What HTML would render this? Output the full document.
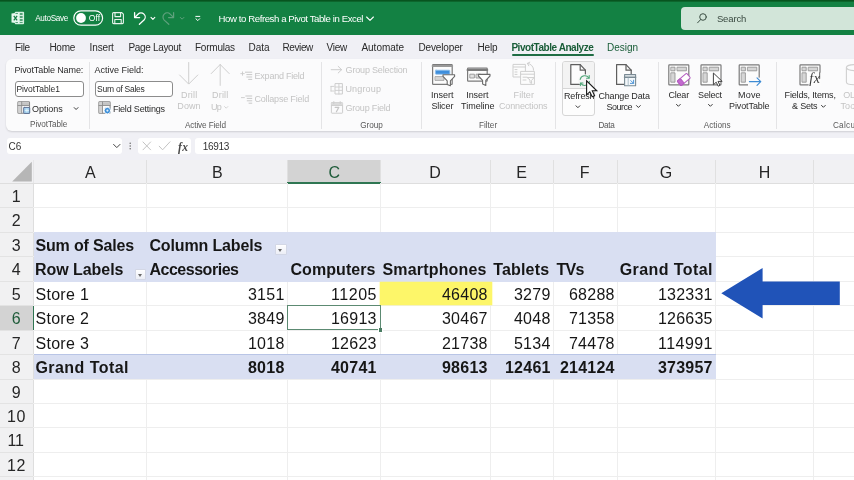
<!DOCTYPE html>
<html lang="en">
<head>
<meta charset="utf-8">
<title>How to Refresh a Pivot Table in Excel</title>
<style>
*{box-sizing:border-box;margin:0;padding:0}
html,body{width:854px;height:480px;overflow:hidden;background:#fff}
body{position:relative;font-family:"Liberation Sans",sans-serif;color:#262626}
.a{position:absolute}
.tx{position:absolute;white-space:nowrap}
#txt{position:absolute;left:0;top:0;width:854px;height:480px;will-change:transform}
svg{position:absolute;overflow:visible}
/* title bar */
#title{left:0;top:0;width:854px;height:35.4px;background:#138143}
#topstrip{left:0;top:0;width:854px;height:2.4px;background:linear-gradient(#07541f 0,#07541f 45%,#117337 100%)}
#search{left:681px;top:7px;width:180px;height:23px;border-radius:4px;background:#d2e5d9}
/* tabs + ribbon backdrop */
#chrome{left:0;top:35px;width:854px;height:125px;background:#f0f0f5}
#ribbon{left:6px;top:58.8px;width:860px;height:72.4px;background:#fbfbfc;border-radius:6px;box-shadow:0 1px 2px rgba(0,0,0,.14)}
.sep{position:absolute;top:62px;width:1px;height:67px;background:#e4e4e6}
.inp{position:absolute;top:81px;height:16px;border:1px solid #8c8c8c;border-radius:3px;background:#fff}
.fbox{position:absolute;top:138px;height:16px;background:#fff;border-radius:3px}
/* grid */
#sheet{left:0;top:160px;width:854px;height:320px;background:#fff}
.ch{position:absolute;top:160px;height:23px;background:#f1f1f3;border-right:1px solid #e0e0e0}
.rh{position:absolute;left:0;width:33px;background:#f1f1f2;border-bottom:1px solid #e3e3e3}
.vl{position:absolute;top:183px;width:1px;height:297px;background:#eeeeee}
.hl{position:absolute;left:33px;height:1px;width:821px;background:#eeeeee}
.band{position:absolute;left:34px;width:682px;background:#d9dff2}
.dd{position:absolute;width:11.6px;height:11.6px;background:linear-gradient(#fefeff,#eceef6);border:1px solid #d3d7e5;border-radius:1px}
.dd:after{content:"";position:absolute;left:2.3px;top:4.2px;border-left:2.5px solid transparent;border-right:2.5px solid transparent;border-top:3px solid #6a6a6a}
</style>
</head>

<body>
<!-- ======= TITLE BAR ======= -->
<div class="a" id="title"></div><div class="a" id="topstrip"></div><div class="a" id="search"></div>
<!-- ======= TABS / RIBBON BACKDROP ======= -->
<div class="a" id="chrome"></div>
<div class="a" id="ribbon"></div>
<div class="a" style="left:512px;top:54.4px;width:82px;height:1.8px;background:#1f6d44;border-radius:1px"></div>
<div class="sep" style="left:89px"></div>
<div class="sep" style="left:321px"></div>
<div class="sep" style="left:421px"></div>
<div class="sep" style="left:555px"></div>
<div class="sep" style="left:658px"></div>
<div class="sep" style="left:776px"></div>
<div class="inp" style="left:15px;width:69px"></div><div class="inp" style="left:95px;width:78px"></div>
<!-- refresh hover button -->
<div class="a" style="left:562px;top:61px;width:33px;height:55px;border:1px solid #d6d6d6;border-radius:3px;background:#fdfdfd"></div>
<div class="a" style="left:563px;top:62px;width:31px;height:27px;background:#f3f3f3;border-bottom:1px solid #d6d6d6;border-radius:2px 2px 0 0"></div>
<!-- ======= FORMULA BAR ======= -->
<div class="fbox" style="left:7px;width:115px"></div><div class="fbox" style="left:138px;width:53px"></div><div class="fbox" style="left:195px;width:670px"></div>
<!-- ======= SHEET ======= -->
<div class="a" id="sheet"></div>
<div class="ch" style="left:34px;width:113px"></div>
<div class="ch" style="left:147px;width:141px"></div>
<div class="ch" style="left:288px;width:93px;background:#d3d3d3"></div>
<div class="ch" style="left:381px;width:110px"></div>
<div class="ch" style="left:491px;width:63px"></div>
<div class="ch" style="left:554px;width:64px"></div>
<div class="ch" style="left:618px;width:98px"></div>
<div class="ch" style="left:716px;width:98px"></div>
<div class="ch" style="left:814px;width:87px"></div>
<div class="a" style="left:0;top:160px;width:34px;height:23px;background:#f1f1f3;border-right:1px solid #e6e6e8"></div>
<div class="a" style="left:0;top:183px;width:854px;height:1px;background:#dedede"></div>
<div class="a" style="left:287px;top:182px;width:94px;height:1.5px;background:#2f7652"></div>
<svg style="left:0;top:160px" width="34" height="24" viewBox="0 160 34 24"><path d="M31.8 161.8 L31.8 181.4 L12.2 181.4 Z" fill="#b6b6b6"/></svg>
<div class="rh" style="top:184px;height:24px"></div>
<div class="rh" style="top:208px;height:25px"></div>
<div class="rh" style="top:233px;height:24px"></div>
<div class="rh" style="top:257px;height:25px"></div>
<div class="rh" style="top:282px;height:24px"></div>
<div class="rh" style="top:306px;height:25px;background:#d3d3d3"></div>
<div class="rh" style="top:331px;height:24px"></div>
<div class="rh" style="top:355px;height:25px"></div>
<div class="rh" style="top:380px;height:24px"></div>
<div class="rh" style="top:404px;height:24px"></div>
<div class="rh" style="top:428px;height:25px"></div>
<div class="rh" style="top:453px;height:24px"></div>
<div class="rh" style="top:477px;height:25px"></div>
<div class="a" style="left:33px;top:183px;width:1px;height:297px;background:#dedede"></div>
<div class="a" style="left:32.5px;top:305px;width:1.5px;height:26px;background:#2f7652"></div>
<div class="vl" style="left:146px"></div>
<div class="vl" style="left:287px"></div>
<div class="vl" style="left:380px"></div>
<div class="vl" style="left:490px"></div>
<div class="vl" style="left:553px"></div>
<div class="vl" style="left:617px"></div>
<div class="vl" style="left:715px"></div>
<div class="vl" style="left:813px"></div>
<div class="hl" style="top:207px"></div>
<div class="hl" style="top:232px"></div>
<div class="hl" style="top:256px"></div>
<div class="hl" style="top:281px"></div>
<div class="hl" style="top:305px"></div>
<div class="hl" style="top:330px"></div>
<div class="hl" style="top:354px"></div>
<div class="hl" style="top:379px"></div>
<div class="hl" style="top:403px"></div>
<div class="hl" style="top:427px"></div>
<div class="hl" style="top:452px"></div>
<div class="hl" style="top:476px"></div>
<div class="band" style="top:232px;height:50px"></div>
<div class="band" style="top:354px;height:25px;border-top:1px solid #b9c5e6"></div>
<div class="a" style="left:379.6px;top:281.8px;width:112px;height:22.8px;background:#fdf669;box-shadow:0 0 .8px .3px #fdf669"></div>
<div class="dd" style="left:275px;top:243.8px"></div><div class="dd" style="left:134.5px;top:268.6px"></div>
<div class="a" style="left:287px;top:305.2px;width:93.6px;height:25px;border:1.2px solid #5c8a72;background:#fff"></div>
<div class="a" style="left:378px;top:327.6px;width:5px;height:5px;background:#fff"></div><div class="a" style="left:378.8px;top:328.4px;width:3.6px;height:3.6px;background:#4a7c62"></div>
<svg style="left:715px;top:262px" width="139" height="64" viewBox="715 262 139 64"><path d="M721.3 293.2 L762.6 268 L762.6 281.5 L839.8 281.5 L839.8 305 L762.6 305 L762.6 318.5 Z" fill="#2053b8"/></svg>
<!-- ======= TITLE BAR ICONS ======= -->
<svg style="left:0;top:0" width="854" height="36" viewBox="0 0 854 36" fill="none" stroke-linecap="round" stroke-linejoin="round">
  <!-- excel logo -->
  <rect x="14.8" y="11.8" width="9.3" height="12.4" rx=".9" fill="#d4f0e0" stroke="none"/>
  <path d="M11.5 13.6 L19.2 12.6 V23.4 L11.5 22.4 Z" fill="#e8f8ef" stroke="none"/>
  <path d="M13.8 15.9l3.3 4.5M17.1 15.9l-3.3 4.5" stroke="#177f46" stroke-width="1.25" stroke-linecap="butt"/>
  <g fill="#2b8a57" stroke="none">
    <rect x="19.7" y="13.3" width="3" height="1.4" rx=".4"/><rect x="19.7" y="16.2" width="3" height="1.5" rx=".4"/><rect x="19.7" y="19.2" width="3" height="1.5" rx=".4"/>
    <rect x="19.7" y="22" width="3" height=".8" rx=".3"/><rect x="15.4" y="22" width="2.6" height=".8" rx=".3"/><rect x="15.4" y="13.3" width="2.6" height=".8" rx=".3"/>
  </g>
  <!-- autosave toggle -->
  <rect x="73.8" y="10.8" width="28.8" height="14.4" rx="7.2" stroke="#fff" stroke-width="1.2"/>
  <circle cx="81" cy="18" r="4.9" fill="#fff"/>
  <!-- save -->
  <path d="M112.6 13.6a1 1 0 0 1 1-1h8.2l1.6 1.6v8.4a1 1 0 0 1-1 1h-8.8a1 1 0 0 1-1-1z" stroke="#e9f4ed" stroke-width="1.1"/>
  <path d="M115 12.8v3.8h5.6v-3.8M114.8 23.4v-3.9h6.4v3.9" stroke="#e9f4ed" stroke-width="1.1"/>
  <!-- undo -->
  <path d="M134.6 12.6v5h5" stroke="#fff" stroke-width="1.3"/>
  <path d="M135 17.2l3-3a4.2 4.2 0 0 1 6 5.9l-4.6 4.2" stroke="#fff" stroke-width="1.3"/>
  <path d="M151 17.4l1.9 1.9 1.9-1.9" stroke="#fff" stroke-width="1.1"/>
  <!-- redo (dim) -->
  <path d="M173.6 12.6v5h-5" stroke="#5fa17d" stroke-width="1.2"/>
  <path d="M173.2 17.2l-3-3a4.2 4.2 0 0 0-6 5.9l4.6 4.2" stroke="#5fa17d" stroke-width="1.2"/>
  <path d="M180.3 17.4l1.8 1.8 1.8-1.8" stroke="#5fa17d" stroke-width="1"/>
  <!-- customize -->
  <path d="M195.8 16.4h4" stroke="#fff" stroke-width="1"/>
  <path d="M195.9 18.7l1.9 1.9 1.9-1.9" stroke="#fff" stroke-width="1"/>
  <!-- title chevron -->
  <path d="M366.6 17l3.4 3.4 3.4-3.4" stroke="#fff" stroke-width="1.1"/>
  <!-- search magnifier -->
  <circle cx="703" cy="17" r="3.3" stroke="#3d5045" stroke-width="1"/>
  <path d="M700.6 19.6l-3 3.2" stroke="#3d5045" stroke-width="1"/>
</svg>
<!-- ======= RIBBON ICONS ======= -->
<svg style="left:0;top:58px" width="854" height="76" viewBox="0 58 854 76" fill="none" stroke-linecap="round" stroke-linejoin="round">
  <defs>
    <g id="pv">
      <rect x=".6" y=".6" width="20" height="20" rx=".6" stroke="#7b7b7b" stroke-width="1.2" fill="#fcfcfc"/>
      <rect x="3" y="3" width="3.8" height="3.6" fill="#d6d6d6" stroke="#8c8c8c" stroke-width=".8"/>
      <rect x="9.2" y="3" width="9" height="3.6" fill="#d6d6d6" stroke="#8c8c8c" stroke-width=".8"/>
      <rect x="3" y="8.6" width="3.8" height="9.4" fill="#d6d6d6" stroke="#8c8c8c" stroke-width=".8"/>
    </g>
    <g id="funnel">
      <path d="M0 0h11.6v1.6l-4.2 4.4v5l-3.2-1.4v-3.6l-4.2-4.4z" fill="#fff" stroke="#6a6a6a" stroke-width="1.1"/>
    </g>
    <g id="doc">
      <path d="M.6 .6h9.4l5.2 5.6v14.2h-14.6z" fill="#fcfcfc" stroke="#5e5e5e" stroke-width="1.2"/>
      <path d="M10 .6v5.6h5.2" stroke="#5e5e5e" stroke-width="1.2"/>
    </g>
    <path id="chev" d="M-1.9 -1l1.9 1.9 1.9-1.9" stroke="#3a3a3a" stroke-width="1"/>
  </defs>

  <!-- Options icon -->
  <rect x="17.9" y="101.8" width="11.6" height="11.4" rx=".8" fill="#fcfcfc" stroke="#858585" stroke-width="1.1"/>
  <rect x="18.4" y="102.3" width="10.6" height="3" fill="#c4c4c4" stroke="none"/>
  <rect x="18.4" y="102.3" width="3.2" height="10.4" fill="#d2d2d2" stroke="none"/>
  <path d="M18 105.5h11.4M21.7 102v11" stroke="#8c8c8c" stroke-width=".9"/>
  <rect x="23.7" y="107.4" width="6" height="6" rx=".5" fill="#a6d4f0" stroke="#5c6f94" stroke-width="1"/>
  <path d="M25.2 110.4h3.4M26.9 108.8v3.2" stroke="#eaf6fd" stroke-width=".8"/>
  <use href="#chev" x="76.1" y="108.6"/>
  <!-- Field Settings icon -->
  <rect x="98.9" y="101.8" width="11.2" height="11.4" rx=".8" fill="#fcfcfc" stroke="#858585" stroke-width="1.1"/>
  <rect x="99.4" y="102.3" width="10.2" height="3" fill="#c4c4c4" stroke="none"/>
  <rect x="99.4" y="102.3" width="3" height="10.4" fill="#d2d2d2" stroke="none"/>
  <path d="M99 105.5h11M102.5 102v11" stroke="#8c8c8c" stroke-width=".9"/>
  <circle cx="107.4" cy="110.6" r="3.3" fill="#3d8fd8" stroke="#fcfcfc" stroke-width=".9"/>
  <circle cx="107.4" cy="110.6" r="1.1" fill="#dff0fc"/>

  <!-- Drill Down (dim) -->
  <path d="M188.7 62.5v21M179.6 75l9.1 9.1 9.1-9.1" stroke="#cfcfcf" stroke-width="1"/>
  <!-- Drill Up (dim) -->
  <path d="M220.2 85.4v-21M211.2 73.6l9-9.1 9 9.1" stroke="#cfcfcf" stroke-width="1"/>
  <path d="M224.6 106.6l1.6 1.6 1.6-1.6" stroke="#cfcfcf" stroke-width=".9"/>
  <!-- Expand / Collapse field (dim) -->
  <path d="M245.4 72.2h6.4M246.8 74.6h5M246.8 77h5M248.6 79.4h3.2" stroke="#c9c9c9" stroke-width="1"/>
  <path d="M240.8 73.6h3.4M242.5 71.9v3.4" stroke="#c9c9c9" stroke-width=".9"/>
  <path d="M245.8 96h6M247.2 98.4h4.6M247.2 100.8h4.6M249 103.2h2.8" stroke="#c9c9c9" stroke-width="1"/>
  <path d="M241.4 97.6h3" stroke="#c9c9c9" stroke-width=".9"/>

  <!-- Group Selection arrow / Ungroup / Group Field (dim) -->
  <path d="M331.2 69.7h10.4M338.2 66.4l3.4 3.3-3.4 3.3" stroke="#cdcdcd" stroke-width="1"/>
  <rect x="335.4" y="83.6" width="7" height="10.4" stroke="#cdcdcd" stroke-width="1"/>
  <path d="M335.4 87h7M335.4 90.4h7M338.9 83.6v10.4M331 86.4h3M331 91h3M331 86.4v4.6" stroke="#cdcdcd" stroke-width=".9"/>
  <rect x="331.4" y="102.6" width="11.2" height="10.6" rx=".6" stroke="#cdcdcd" stroke-width="1"/>
  <rect x="331.4" y="102.6" width="11.2" height="2.8" fill="#dcdcdc" stroke="none"/><path d="M331.4 105.4h11.2M333.8 101.6v2M340.2 101.6v2" stroke="#cdcdcd" stroke-width="1"/>
  <path d="M335.2 107.4h3.6l-2.4 4.4" stroke="#c6c6c6" stroke-width="1.2"/>

  <!-- Insert Slicer -->
  <rect x="432.6" y="64.6" width="19.6" height="19.8" rx=".6" stroke="#7b7b7b" stroke-width="1.2" fill="#fcfcfc"/>
  <path d="M432.6 66h19.6" stroke="#999" stroke-width="2"/>
  <rect x="435.4" y="70.2" width="14.4" height="4" rx=".6" fill="#3f8fdc" stroke="#8fc0ee" stroke-width=".8"/>
  <rect x="435.4" y="76.6" width="8.6" height="3.8" fill="#d6d6d6" stroke="#9a9a9a" stroke-width=".8"/>
  <use href="#funnel" x="443" y="74.8"/>
  <!-- Insert Timeline -->
  <rect x="467.6" y="68.2" width="19.6" height="13" rx=".6" stroke="#7b7b7b" stroke-width="1.2" fill="#fcfcfc"/>
  <path d="M467.6 70h19.6" stroke="#7b7b7b" stroke-width="2.2"/>
  <rect x="470.2" y="74.2" width="4.2" height="3.8" fill="#e2e2e2" stroke="#8c8c8c" stroke-width=".8"/>
  <rect x="476.4" y="74.2" width="4.2" height="3.8" fill="#e2e2e2" stroke="#8c8c8c" stroke-width=".8"/>
  <use href="#funnel" x="478.4" y="74.4"/>
  <!-- Filter Connections (dim) -->
  <g stroke="#cfcfcf" stroke-width="1">
    <rect x="513.4" y="64.4" width="12" height="12.6" fill="#fcfcfc"/>
    <path d="M513.4 67h12M515 69.6h2M515 72h2M515 74.4h2"/>
    <path d="M527.4 63.4a6.4 6.4 0 0 1 6.2 6.8M527.4 63.4l2.4-1.2M527.4 63.4l1.4 2.4"/>
    <rect x="521" y="71.4" width="13.4" height="13" fill="#fcfcfc"/>
    <path d="M521 74.2h13.4M523 77.2h4M523 80h3"/>
    <path d="M527.6 77.6h6.4l-2.4 2.8v3l-1.6-.8v-2.2z" fill="#fcfcfc"/>
  </g>

  <!-- Refresh -->
  <use href="#doc" x="570.2" y="64"/>
  <circle cx="584.8" cy="80.6" r="6.4" fill="#f4f4f4"/>
  <path d="M580.2 79.4a4.8 4.8 0 0 1 8.6-1.6M589.4 81.6a4.8 4.8 0 0 1-8.6 1.8" stroke="#4fa678" stroke-width="1.1"/>
  <path d="M589.2 75.6v2.6h-2.6M580.4 85.6v-2.6h2.6" stroke="#4fa678" stroke-width="1.1"/>
  <use href="#chev" x="577.9" y="106.8"/>
  <!-- Change Data Source -->
  <use href="#doc" x="616" y="64"/>
  <rect x="624.6" y="74.6" width="11" height="11.2" fill="#f4f8fb" stroke="#7a8a94" stroke-width="1.1"/>
  <path d="M624.6 77.2h11" stroke="#7a8a94" stroke-width="1.6"/>
  <path d="M628.2 78v7.6" stroke="#9ab0bd" stroke-width=".8"/>
  <path d="M630.4 83.4h3.2v-3.2M633.4 83.2l-2.6-2.6" stroke="#3d8bd4" stroke-width=".9"/>
  <use href="#chev" x="638.4" y="106.6"/>

  <!-- Clear -->
  <use href="#pv" x="668.2" y="64.2"/>
  <g transform="translate(683.8 79.5) rotate(-40)">
    <rect x="-6.2" y="-3" width="12.4" height="6" rx=".8" fill="#fff" stroke="#b45cc0" stroke-width="1"/>
    <rect x="-6.2" y="-3" width="4.2" height="6" rx=".8" fill="#c36bd0" stroke="#b45cc0" stroke-width="1"/>
  </g>
  <use href="#chev" x="678.4" y="105.4"/>
  <!-- Select -->
  <use href="#pv" x="700.4" y="64.2"/>
  <path d="M713.4 73.4v11.4l2.8-2.6 2 4 1.8-.9-2-3.9h3.8z" fill="#fff" stroke="#444" stroke-width="1" />
  <use href="#chev" x="710.4" y="105.4"/>
  <!-- Move PivotTable -->
  <use href="#pv" x="738.6" y="64.2"/>
  <rect x="748" y="77.6" width="14" height="9" fill="#fbfbfc"/>
  <path d="M749.4 81.6h11.2M757 77.8l3.8 3.8-3.8 3.8" stroke="#3d8bd4" stroke-width="1.1"/>
  <!-- Fields, Items & Sets -->
  <use href="#pv" x="799.4" y="64.2"/>
  <rect x="808.6" y="72.6" width="12.6" height="13.4" fill="#fcfcfc"/>
  <path d="M819.6 72.6v6" stroke="#7b7b7b" stroke-width="1.2"/>
  <use href="#chev" x="823.4" y="106.4"/>
  <!-- OLAP cylinder (dim) -->
  <path d="M846.4 67.6v14.4c0 1.6 3.6 2.8 8 2.8s8-1.2 8-2.8v-14.4" stroke="#d0d0d0" stroke-width="1.1"/>
  <ellipse cx="854.4" cy="67.6" rx="8" ry="3" stroke="#d0d0d0" stroke-width="1.1"/>

</svg>
<!-- ======= FORMULA BAR ICONS ======= -->
<svg style="left:0;top:134px" width="260" height="26" viewBox="0 134 260 26" fill="none" stroke-linecap="round" stroke-linejoin="round">
  <path d="M113.6 144.4l3.2 3.2 3.2-3.2" stroke="#444" stroke-width="1"/>
  <circle cx="130.2" cy="143.2" r=".75" fill="#666"/><circle cx="130.2" cy="146" r=".75" fill="#666"/><circle cx="130.2" cy="148.8" r=".75" fill="#666"/>
  <path d="M143 142l7.6 7.8M150.6 142l-7.6 7.8" stroke="#c4c4c4" stroke-width="1"/>
  <path d="M159.2 146.2l3.4 3.6 7.4-8" stroke="#c4c4c4" stroke-width="1"/>
</svg>

<!-- ======= TEXT ======= -->
<div id="txt">
<div class="tx" style="left:84.90px;top:163.05px;font-size:16px;line-height:19px;letter-spacing:0.000px;color:#262626">A</div>
<div class="tx" style="left:212.10px;top:163.05px;font-size:16px;line-height:19px;letter-spacing:0.000px;color:#262626">B</div>
<div class="tx" style="left:328.60px;top:163.05px;font-size:16px;line-height:19px;letter-spacing:0.000px;color:#1f5c3a">C</div>
<div class="tx" style="left:429.30px;top:163.05px;font-size:16px;line-height:19px;letter-spacing:0.000px;color:#262626">D</div>
<div class="tx" style="left:516.25px;top:163.05px;font-size:16px;line-height:19px;letter-spacing:0.000px;color:#262626">E</div>
<div class="tx" style="left:579.80px;top:163.05px;font-size:16px;line-height:19px;letter-spacing:0.000px;color:#262626">F</div>
<div class="tx" style="left:659.80px;top:163.05px;font-size:16px;line-height:19px;letter-spacing:0.000px;color:#262626">G</div>
<div class="tx" style="left:758.85px;top:163.05px;font-size:16px;line-height:19px;letter-spacing:0.000px;color:#262626">H</div>
<div class="tx" style="left:11.70px;top:187.05px;font-size:16px;line-height:19px;letter-spacing:0.000px;color:#262626">1</div>
<div class="tx" style="left:11.85px;top:211.05px;font-size:16px;line-height:19px;letter-spacing:0.000px;color:#262626">2</div>
<div class="tx" style="left:11.85px;top:236.05px;font-size:16px;line-height:19px;letter-spacing:0.000px;color:#262626">3</div>
<div class="tx" style="left:11.85px;top:260.05px;font-size:16px;line-height:19px;letter-spacing:0.000px;color:#262626">4</div>
<div class="tx" style="left:11.85px;top:285.05px;font-size:16px;line-height:19px;letter-spacing:0.000px;color:#262626">5</div>
<div class="tx" style="left:11.85px;top:309.05px;font-size:16px;line-height:19px;letter-spacing:0.000px;color:#1f5c3a">6</div>
<div class="tx" style="left:11.85px;top:334.05px;font-size:16px;line-height:19px;letter-spacing:0.000px;color:#262626">7</div>
<div class="tx" style="left:11.85px;top:358.05px;font-size:16px;line-height:19px;letter-spacing:0.000px;color:#262626">8</div>
<div class="tx" style="left:11.85px;top:383.05px;font-size:16px;line-height:19px;letter-spacing:0.000px;color:#262626">9</div>
<div class="tx" style="left:6.90px;top:407.05px;font-size:16px;line-height:19px;letter-spacing:0.802px;color:#262626">10</div>
<div class="tx" style="left:7.40px;top:431.05px;font-size:16px;line-height:19px;letter-spacing:-0.011px;color:#262626">11</div>
<div class="tx" style="left:6.90px;top:456.05px;font-size:16px;line-height:19px;letter-spacing:0.802px;color:#262626">12</div>
<div class="tx" style="left:35.40px;top:236.05px;font-size:16px;line-height:19px;letter-spacing:-0.153px;color:#161616;font-weight:bold">Sum of Sales</div>
<div class="tx" style="left:149.40px;top:236.05px;font-size:16px;line-height:19px;letter-spacing:-0.132px;color:#161616;font-weight:bold">Column Labels</div>
<div class="tx" style="left:34.90px;top:260.05px;font-size:16px;line-height:19px;letter-spacing:-0.034px;color:#161616;font-weight:bold">Row Labels</div>
<div class="tx" style="left:149.40px;top:260.05px;font-size:16px;line-height:19px;letter-spacing:-0.469px;color:#161616;font-weight:bold">Accessories</div>
<div class="tx" style="left:290.40px;top:260.05px;font-size:16px;line-height:19px;letter-spacing:0.081px;color:#161616;font-weight:bold">Computers</div>
<div class="tx" style="left:382.40px;top:260.05px;font-size:16px;line-height:19px;letter-spacing:0.186px;color:#161616;font-weight:bold">Smartphones</div>
<div class="tx" style="left:493.20px;top:260.05px;font-size:16px;line-height:19px;letter-spacing:0.178px;color:#161616;font-weight:bold">Tablets</div>
<div class="tx" style="left:556.50px;top:260.05px;font-size:16px;line-height:19px;letter-spacing:-0.773px;color:#161616;font-weight:bold">TVs</div>
<div class="tx" style="left:619.70px;top:260.05px;font-size:16px;line-height:19px;letter-spacing:0.425px;color:#161616;font-weight:bold">Grand Total</div>
<div class="tx" style="left:35.40px;top:285.05px;font-size:16px;line-height:19px;letter-spacing:0.319px;color:#161616">Store 1</div>
<div class="tx" style="left:247.90px;top:285.05px;font-size:16px;line-height:19px;letter-spacing:0.335px;color:#161616">3151</div>
<div class="tx" style="left:330.95px;top:285.05px;font-size:16px;line-height:19px;letter-spacing:0.561px;color:#161616">11205</div>
<div class="tx" style="left:441.95px;top:285.05px;font-size:16px;line-height:19px;letter-spacing:0.264px;color:#161616">46408</div>
<div class="tx" style="left:513.90px;top:285.05px;font-size:16px;line-height:19px;letter-spacing:0.335px;color:#161616">3279</div>
<div class="tx" style="left:568.95px;top:285.05px;font-size:16px;line-height:19px;letter-spacing:0.264px;color:#161616">68288</div>
<div class="tx" style="left:658.00px;top:285.05px;font-size:16px;line-height:19px;letter-spacing:0.222px;color:#161616">132331</div>
<div class="tx" style="left:35.40px;top:309.05px;font-size:16px;line-height:19px;letter-spacing:0.319px;color:#161616">Store 2</div>
<div class="tx" style="left:247.90px;top:309.05px;font-size:16px;line-height:19px;letter-spacing:0.335px;color:#161616">3849</div>
<div class="tx" style="left:330.95px;top:309.05px;font-size:16px;line-height:19px;letter-spacing:0.264px;color:#161616">16913</div>
<div class="tx" style="left:441.95px;top:309.05px;font-size:16px;line-height:19px;letter-spacing:0.264px;color:#161616">30467</div>
<div class="tx" style="left:513.90px;top:309.05px;font-size:16px;line-height:19px;letter-spacing:0.335px;color:#161616">4048</div>
<div class="tx" style="left:568.95px;top:309.05px;font-size:16px;line-height:19px;letter-spacing:0.264px;color:#161616">71358</div>
<div class="tx" style="left:658.00px;top:309.05px;font-size:16px;line-height:19px;letter-spacing:0.222px;color:#161616">126635</div>
<div class="tx" style="left:35.40px;top:334.05px;font-size:16px;line-height:19px;letter-spacing:0.319px;color:#161616">Store 3</div>
<div class="tx" style="left:247.90px;top:334.05px;font-size:16px;line-height:19px;letter-spacing:0.335px;color:#161616">1018</div>
<div class="tx" style="left:330.95px;top:334.05px;font-size:16px;line-height:19px;letter-spacing:0.264px;color:#161616">12623</div>
<div class="tx" style="left:441.95px;top:334.05px;font-size:16px;line-height:19px;letter-spacing:0.264px;color:#161616">21738</div>
<div class="tx" style="left:513.90px;top:334.05px;font-size:16px;line-height:19px;letter-spacing:0.335px;color:#161616">5134</div>
<div class="tx" style="left:568.95px;top:334.05px;font-size:16px;line-height:19px;letter-spacing:0.264px;color:#161616">74478</div>
<div class="tx" style="left:658.00px;top:334.05px;font-size:16px;line-height:19px;letter-spacing:0.459px;color:#161616">114991</div>
<div class="tx" style="left:35.40px;top:358.05px;font-size:16px;line-height:19px;letter-spacing:0.455px;color:#161616;font-weight:bold">Grand Total</div>
<div class="tx" style="left:247.90px;top:358.05px;font-size:16px;line-height:19px;letter-spacing:0.335px;color:#161616;font-weight:bold">8018</div>
<div class="tx" style="left:330.95px;top:358.05px;font-size:16px;line-height:19px;letter-spacing:0.264px;color:#161616;font-weight:bold">40741</div>
<div class="tx" style="left:441.95px;top:358.05px;font-size:16px;line-height:19px;letter-spacing:0.264px;color:#161616;font-weight:bold">98613</div>
<div class="tx" style="left:504.95px;top:358.05px;font-size:16px;line-height:19px;letter-spacing:0.264px;color:#161616;font-weight:bold">12461</div>
<div class="tx" style="left:560.00px;top:358.05px;font-size:16px;line-height:19px;letter-spacing:0.222px;color:#161616;font-weight:bold">214124</div>
<div class="tx" style="left:658.00px;top:358.05px;font-size:16px;line-height:19px;letter-spacing:0.222px;color:#161616;font-weight:bold">373957</div>
<div class="tx" style="left:35.20px;top:13.55px;font-size:8.2px;line-height:10px;letter-spacing:-0.336px;color:#ffffff">AutoSave</div>
<div class="tx" style="left:88.70px;top:13.05px;font-size:8.5px;line-height:10px;letter-spacing:0.140px;color:#ffffff">Off</div>
<div class="tx" style="left:218.60px;top:12.55px;font-size:9.6px;line-height:12px;letter-spacing:-0.415px;color:#ffffff">How to Refresh a Pivot Table in Excel</div>
<div class="tx" style="left:716.90px;top:13.05px;font-size:9.5px;line-height:11px;letter-spacing:-0.123px;color:#3a4a41">Search</div>
<div class="tx" style="left:14.90px;top:41.55px;font-size:10px;line-height:12px;letter-spacing:-0.284px;color:#2a2a2a">File</div>
<div class="tx" style="left:49.40px;top:41.55px;font-size:10px;line-height:12px;letter-spacing:-0.238px;color:#2a2a2a">Home</div>
<div class="tx" style="left:89.60px;top:41.55px;font-size:10px;line-height:12px;letter-spacing:-0.146px;color:#2a2a2a">Insert</div>
<div class="tx" style="left:128.40px;top:41.55px;font-size:10px;line-height:12px;letter-spacing:-0.318px;color:#2a2a2a">Page Layout</div>
<div class="tx" style="left:194.90px;top:41.55px;font-size:10px;line-height:12px;letter-spacing:-0.211px;color:#2a2a2a">Formulas</div>
<div class="tx" style="left:248.40px;top:41.55px;font-size:10px;line-height:12px;letter-spacing:0.046px;color:#2a2a2a">Data</div>
<div class="tx" style="left:282.40px;top:41.55px;font-size:10px;line-height:12px;letter-spacing:-0.373px;color:#2a2a2a">Review</div>
<div class="tx" style="left:326.40px;top:41.55px;font-size:10px;line-height:12px;letter-spacing:-0.191px;color:#2a2a2a">View</div>
<div class="tx" style="left:361.40px;top:41.55px;font-size:10px;line-height:12px;letter-spacing:-0.006px;color:#2a2a2a">Automate</div>
<div class="tx" style="left:418.40px;top:41.55px;font-size:10px;line-height:12px;letter-spacing:-0.131px;color:#2a2a2a">Developer</div>
<div class="tx" style="left:477.40px;top:41.55px;font-size:10px;line-height:12px;letter-spacing:-0.102px;color:#2a2a2a">Help</div>
<div class="tx" style="left:511.40px;top:41.55px;font-size:10px;line-height:12px;letter-spacing:-0.449px;color:#185c37;font-weight:bold">PivotTable Analyze</div>
<div class="tx" style="left:606.90px;top:41.55px;font-size:10px;line-height:12px;letter-spacing:0.027px;color:#185c37">Design</div>
<div class="tx" style="left:14.40px;top:64.55px;font-size:9px;line-height:11px;letter-spacing:-0.109px;color:#2b2b2b">PivotTable Name:</div>
<div class="tx" style="left:16.40px;top:84.05px;font-size:8.5px;line-height:10px;letter-spacing:-0.042px;color:#2b2b2b">PivotTable1</div>
<div class="tx" style="left:32.00px;top:103.55px;font-size:9px;line-height:11px;letter-spacing:-0.036px;color:#2b2b2b">Options</div>
<div class="tx" style="left:30.00px;top:119.55px;font-size:8.2px;line-height:10px;letter-spacing:-0.047px;color:#595959">PivotTable</div>
<div class="tx" style="left:94.60px;top:64.55px;font-size:9px;line-height:11px;letter-spacing:-0.010px;color:#2b2b2b">Active Field:</div>
<div class="tx" style="left:97.10px;top:84.05px;font-size:8.5px;line-height:10px;letter-spacing:-0.255px;color:#2b2b2b">Sum of Sales</div>
<div class="tx" style="left:112.90px;top:103.55px;font-size:9px;line-height:11px;letter-spacing:-0.179px;color:#2b2b2b">Field Settings</div>
<div class="tx" style="left:181.00px;top:89.55px;font-size:9px;line-height:11px;letter-spacing:0.176px;color:#c4c4c4">Drill</div>
<div class="tx" style="left:177.30px;top:100.55px;font-size:9px;line-height:11px;letter-spacing:0.099px;color:#c4c4c4">Down</div>
<div class="tx" style="left:212.10px;top:89.55px;font-size:9px;line-height:11px;letter-spacing:0.176px;color:#c4c4c4">Drill</div>
<div class="tx" style="left:211.00px;top:101.55px;font-size:9px;line-height:11px;letter-spacing:-0.700px;color:#c4c4c4">Up</div>
<div class="tx" style="left:254.60px;top:70.55px;font-size:9px;line-height:11px;letter-spacing:-0.239px;color:#c4c4c4">Expand Field</div>
<div class="tx" style="left:254.40px;top:93.55px;font-size:9px;line-height:11px;letter-spacing:-0.171px;color:#c4c4c4">Collapse Field</div>
<div class="tx" style="left:184.90px;top:120.55px;font-size:8.2px;line-height:10px;letter-spacing:-0.115px;color:#595959">Active Field</div>
<div class="tx" style="left:345.60px;top:64.55px;font-size:9px;line-height:11px;letter-spacing:-0.181px;color:#c4c4c4">Group Selection</div>
<div class="tx" style="left:345.40px;top:83.55px;font-size:9px;line-height:11px;letter-spacing:0.164px;color:#c4c4c4">Ungroup</div>
<div class="tx" style="left:345.40px;top:102.55px;font-size:9px;line-height:11px;letter-spacing:-0.182px;color:#c4c4c4">Group Field</div>
<div class="tx" style="left:360.20px;top:120.55px;font-size:8.2px;line-height:10px;letter-spacing:-0.025px;color:#595959">Group</div>
<div class="tx" style="left:431.00px;top:89.55px;font-size:9px;line-height:11px;letter-spacing:-0.022px;color:#2b2b2b">Insert</div>
<div class="tx" style="left:431.40px;top:100.55px;font-size:9px;line-height:11px;letter-spacing:-0.101px;color:#2b2b2b">Slicer</div>
<div class="tx" style="left:466.20px;top:89.55px;font-size:9px;line-height:11px;letter-spacing:-0.042px;color:#2b2b2b">Insert</div>
<div class="tx" style="left:461.00px;top:100.55px;font-size:9px;line-height:11px;letter-spacing:-0.010px;color:#2b2b2b">Timeline</div>
<div class="tx" style="left:513.60px;top:89.55px;font-size:9px;line-height:11px;letter-spacing:0.060px;color:#c4c4c4">Filter</div>
<div class="tx" style="left:499.00px;top:100.55px;font-size:9px;line-height:11px;letter-spacing:-0.153px;color:#c4c4c4">Connections</div>
<div class="tx" style="left:479.00px;top:120.55px;font-size:8.2px;line-height:10px;letter-spacing:-0.013px;color:#595959">Filter</div>
<div class="tx" style="left:564.00px;top:90.55px;font-size:9px;line-height:11px;letter-spacing:-0.151px;color:#2b2b2b">Refresh</div>
<div class="tx" style="left:598.40px;top:90.55px;font-size:9px;line-height:11px;letter-spacing:-0.153px;color:#2b2b2b">Change Data</div>
<div class="tx" style="left:606.50px;top:101.55px;font-size:9px;line-height:11px;letter-spacing:-0.482px;color:#2b2b2b">Source</div>
<div class="tx" style="left:598.40px;top:120.55px;font-size:8.2px;line-height:10px;letter-spacing:-0.314px;color:#595959">Data</div>
<div class="tx" style="left:668.40px;top:89.55px;font-size:9px;line-height:11px;letter-spacing:-0.177px;color:#2b2b2b">Clear</div>
<div class="tx" style="left:698.10px;top:89.55px;font-size:9px;line-height:11px;letter-spacing:-0.203px;color:#2b2b2b">Select</div>
<div class="tx" style="left:738.00px;top:89.55px;font-size:9px;line-height:11px;letter-spacing:0.199px;color:#2b2b2b">Move</div>
<div class="tx" style="left:729.00px;top:100.55px;font-size:9px;line-height:11px;letter-spacing:-0.102px;color:#2b2b2b">PivotTable</div>
<div class="tx" style="left:703.70px;top:120.55px;font-size:8.2px;line-height:10px;letter-spacing:0.024px;color:#595959">Actions</div>
<div class="tx" style="left:784.60px;top:89.55px;font-size:9px;line-height:11px;letter-spacing:-0.170px;color:#2b2b2b">Fields, Items,</div>
<div class="tx" style="left:792.10px;top:100.55px;font-size:9px;line-height:11px;letter-spacing:-0.202px;color:#2b2b2b">&amp; Sets</div>
<div class="tx" style="left:843.20px;top:89.55px;font-size:9px;line-height:11px;letter-spacing:-0.203px;color:#c4c4c4">OLAP</div>
<div class="tx" style="left:840.40px;top:100.55px;font-size:9px;line-height:11px;letter-spacing:0.172px;color:#c4c4c4">Tools</div>
<div class="tx" style="left:832.90px;top:120.55px;font-size:8.2px;line-height:10px;letter-spacing:0.290px;color:#595959">Calculations</div>
<div class="tx" style="left:8.50px;top:140.55px;font-size:10px;line-height:12px;letter-spacing:0.078px;color:#333">C6</div>
<div class="tx" style="left:202.70px;top:140.55px;font-size:10px;line-height:12px;letter-spacing:-0.287px;color:#333">16913</div>
<div class="tx" style="left:177.90px;top:140.05px;font-size:11.5px;line-height:14px;letter-spacing:0.470px;color:#4a4a4a;font-weight:bold;font-style:italic;font-family:'Liberation Serif', serif">fx</div>
<div class="tx" style="left:809.20px;top:70.05px;font-size:14px;line-height:17px;letter-spacing:0.710px;color:#3a3a3a;font-style:italic;font-family:'Liberation Serif', serif">fx</div>
</div>
<!-- ======= MOUSE CURSOR (above text) ======= -->
<svg style="left:580px;top:76px" width="24" height="26" viewBox="580 76 24 26">
  <path d="M586.6 80.8v14l3.2-3 2.4 5 2.4-1.1-2.3-4.9h4.5z" fill="#fff" stroke="#1a1a1a" stroke-width="1.1" stroke-linejoin="miter"/>
</svg>
</body>
</html>
